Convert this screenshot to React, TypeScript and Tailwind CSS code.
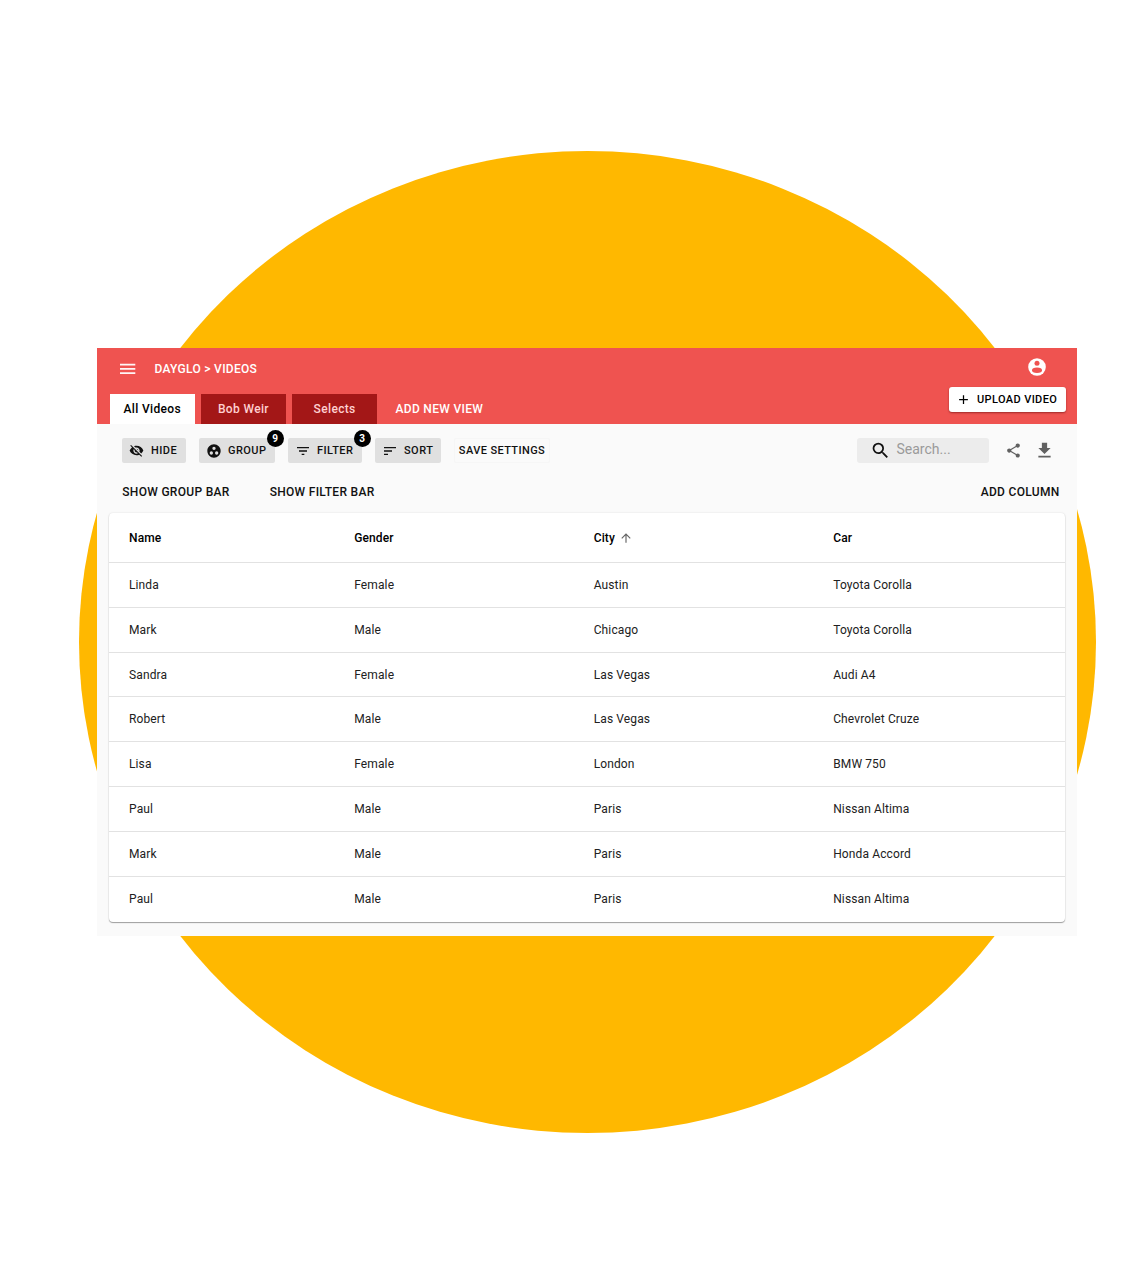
import React from "react";
import {
  MdAdd,
  MdArrowUpward,
  MdFilterList,
  MdGroupWork,
  MdSearch,
  MdShare,
  MdSort,
  MdVisibilityOff,
} from "react-icons/md";

const rows = [
  ["Linda", "Female", "Austin", "Toyota Corolla"],
  ["Mark", "Male", "Chicago", "Toyota Corolla"],
  ["Sandra", "Female", "Las Vegas", "Audi A4"],
  ["Robert", "Male", "Las Vegas", "Chevrolet Cruze"],
  ["Lisa", "Female", "London", "BMW 750"],
  ["Paul", "Male", "Paris", "Nissan Altima"],
  ["Mark", "Male", "Paris", "Honda Accord"],
  ["Paul", "Male", "Paris", "Nissan Altima"],
];

const grid = "grid grid-cols-[225.2px_239.5px_239.5px_1fr] items-center pl-5";

function MenuIcon() {
  return (
    <svg width="16" height="12" viewBox="0 0 16 12" className="block" fill="#fff" fillOpacity="0.95">
      <path d="M0 .8h15.3v1.8H0zM0 5h15.3v1.8H0zM0 9.2h15.3V11H0z" />
    </svg>
  );
}

function AccountIcon() {
  return (
    <svg width="18" height="18" viewBox="0 0 18 18" className="block">
      <circle cx="9" cy="9" r="8.8" fill="#fff" />
      <circle cx="9" cy="5.3" r="2.5" fill="#ef5350" />
      <ellipse cx="9" cy="12.2" rx="5" ry="2.7" fill="#ef5350" />
    </svg>
  );
}

function DownloadIcon() {
  return (
    <svg width="21" height="21" viewBox="0 0 24 24" className="block" fill="#616161">
      <path d="M19 9h-4V3H9v6H5l7 7 7-7zM5 18v2h14v-2H5z" />
    </svg>
  );
}

type ToolProps = {
  icon: React.ReactNode;
  label: string;
  className: string;
  badge?: string;
};

function Tool({ icon, label, className, badge }: ToolProps) {
  return (
    <button
      className={`relative flex h-[25px] items-center rounded-[2px] bg-[#e0e0e0] text-[11px] font-medium tracking-[0.45px] whitespace-nowrap ${className}`}
    >
      <span className="flex w-[22px] shrink-0">{icon}</span>
      <span className="pt-[2px]">{label}</span>
      {badge && (
        <span className="absolute -top-[8.5px] -right-[8.5px] flex size-[17px] items-center justify-center rounded-full bg-black text-[10px] font-bold tracking-normal text-white">
          {badge}
        </span>
      )}
    </button>
  );
}

function Header() {
  return (
    <header className="flex h-[76px] justify-between bg-[#ef5350] text-white">
      <div className="flex flex-col justify-between">
        <div className="flex h-[41px] items-center pl-[23px]">
          <MenuIcon />
          <span className="ml-[18.5px] text-[12px] font-medium tracking-[0.3px]">DAYGLO &gt; VIDEOS</span>
        </div>
        <nav className="flex h-[30px] gap-[6.7px] pl-[13px] text-[12px] font-medium tracking-[0.35px]">
          <button className="w-[84.5px] bg-white text-black">All Videos</button>
          <button className="w-[84.5px] bg-[#a31717] text-[#ffd0d0]">Bob Weir</button>
          <button className="w-[84.5px] bg-[#a31717] text-[#ffd0d0]">Selects</button>
          <button className="ml-[12px] tracking-[0.3px]">ADD NEW VIEW</button>
        </nav>
      </div>
      <div className="flex flex-col items-end pr-[11px]">
        <div className="mt-[10px] mr-[20px]">
          <AccountIcon />
        </div>
        <button className="mt-[11px] flex h-[25px] w-[117px] items-center rounded-[3px] bg-white pl-[7px] text-[11px] font-medium tracking-[0.38px] whitespace-nowrap text-black shadow-[0_1px_2px_rgba(80,0,0,0.5)]">
          <MdAdd className="mr-[6px] size-[15px]" />
          <span className="pt-[2px]">UPLOAD VIDEO</span>
        </button>
      </div>
    </header>
  );
}

function Toolbar() {
  return (
    <div className="mt-[14px] flex h-[25px] items-center pr-[22.5px] pl-[25px]">
      <Tool className="w-[64px] pl-[7px]" icon={<MdVisibilityOff className="size-[15px]" />} label="HIDE" />
      <Tool className="ml-[13px] w-[76px] pl-[7px]" icon={<MdGroupWork className="size-[16px]" />} label="GROUP" badge="9" />
      <Tool className="ml-[13px] w-[74px] pl-[7px]" icon={<MdFilterList className="size-[16px]" />} label="FILTER" badge="3" />
      <Tool className="ml-[13px] w-[66px] pl-[7px]" icon={<MdSort className="size-[16px]" />} label="SORT" />
      <button className="ml-[13px] h-[25px] w-[96px] rounded-[2px] border border-[#f6f6f6] pt-[2px] text-[11px] font-medium tracking-[0.4px] whitespace-nowrap">
        SAVE SETTINGS
      </button>
      <div className="ml-auto flex h-[25px] w-[132px] items-center rounded-[3px] bg-[#ececec] pl-[13px]">
        <MdSearch className="size-[21px] text-[#111]" />
        <span className="-mt-[2px] ml-[6px] text-[14px] text-[#9a9a9a]">Search...</span>
      </div>
      <MdShare className="ml-[16px] size-[17px] text-[#616161]" />
      <div className="ml-[12px]">
        <DownloadIcon />
      </div>
    </div>
  );
}

function Table() {
  return (
    <section className="mx-3 mt-[11.4px] h-[408.4px] overflow-hidden rounded-[4px] bg-white text-[12px] tracking-[0.12px] text-[#212121] shadow-[0_1px_1px_rgba(0,0,0,0.35),0_0_2px_rgba(0,0,0,0.12)]">
      <div className={`${grid} h-[48.4px] font-medium text-black`}>
        <span>Name</span>
        <span>Gender</span>
        <span className="flex items-center gap-[4px]">
          City
          <MdArrowUpward className="size-[14px] text-[#666]" />
        </span>
        <span>Car</span>
      </div>
      {rows.map((row, i) => (
        <div key={i} className={`${grid} h-[44.9px] border-t border-[#e2e2e2]`}>
          {row.map((cell, j) => (
            <span key={j}>{cell}</span>
          ))}
        </div>
      ))}
    </section>
  );
}

export default function App() {
  return (
    <main className="relative flex h-[1284px] w-[1144px] flex-col overflow-hidden bg-white pt-[348px] pl-[97px] font-['Roboto',sans-serif] text-[#111]">
      <div className="absolute top-[151px] left-[79px] h-[982px] w-[1017px] rounded-[50%] bg-[#ffb800]" />
      <div className="relative h-[588px] w-[980px] bg-[#fafafa]">
        <Header />
        <Toolbar />
        <div className="mt-[19px] flex h-[20px] items-center pr-[17.5px] pl-[25.3px] text-[12px] font-medium tracking-[0.3px]">
          <span>SHOW GROUP BAR</span>
          <span className="ml-[40px]">SHOW FILTER BAR</span>
          <span className="ml-auto">ADD COLUMN</span>
        </div>
        <Table />
      </div>
    </main>
  );
}
